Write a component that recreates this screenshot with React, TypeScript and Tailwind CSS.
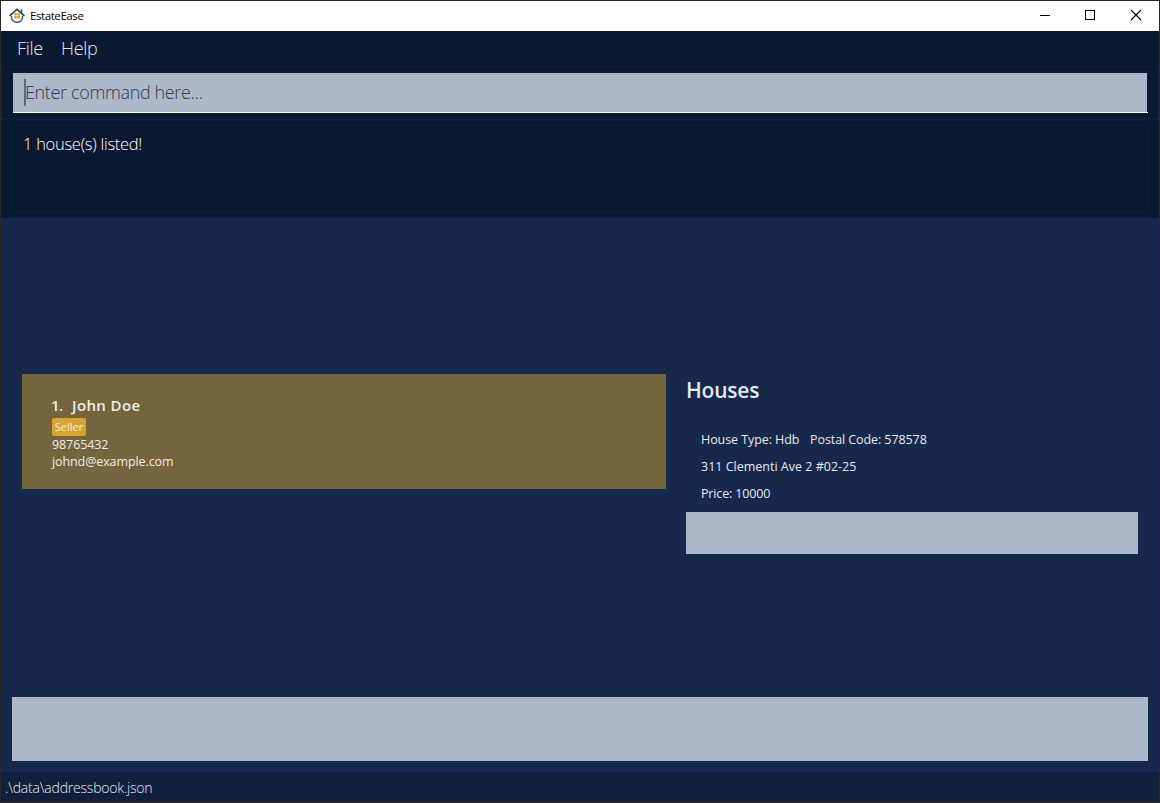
import React from "react";

function HouseLogo() {
  return (
    <svg width="16" height="16" viewBox="0 0 16 16" fill="none">
      <path d="M.6 7.800 8 1.300l7.400 6.500" stroke="#1f4a60" strokeWidth="1.600" />
      <path d="M12.500 1.500v3.400" stroke="#1f4a60" strokeWidth="1.600" />
      <path d="M2.500 8v2c.8 2.800 2.900 4.300 5.500 4.300s4.700-1.500 5.500-4.300V8" stroke="#3c6173" strokeWidth="1.400" />
      <path d="M5.200 5h2.500v2.500H5.200zM8.300 5h2.500v2.500H8.300zM5.200 8h2.500v2.500H5.200zM8.300 8h2.500v2.500H8.300z" fill="#f09a1c" />
    </svg>
  );
}

function TitleBar() {
  return (
    <header className="flex h-[30px] shrink-0 items-center bg-white pl-2 text-black">
      <HouseLogo />
      <span className="ml-[5px] text-[11.5px] leading-4 tracking-[-0.42px]">EstateEase</span>
      <div className="ml-auto flex h-full items-center">
        <svg width="137" height="30" viewBox="0 0 137 30" fill="none" stroke="#000" shapeRendering="crispEdges">
          <path d="M18 14.500h10" />
          <rect x="63.500" y="9.500" width="9" height="9" />
          <path d="m109 9 10 10m0-10-10 10" strokeWidth="1.100" shapeRendering="geometricPrecision" />
        </svg>
      </div>
    </header>
  );
}

function PersonCard() {
  return (
    <article className="h-[115px] w-[644px] bg-[#76643e] pl-[30px] pt-[22px] text-[#eeece6]">
      <h2 className="flex h-[22px] gap-[9px] whitespace-pre text-[15px] font-semibold leading-[19px]">
        <span className="-ml-px w-[12px] tracking-[-0.5px]">1.</span>
        <span className="tracking-[0.38px]">John Doe</span>
      </h2>
      <div className="flex h-[18px] w-[34px] items-center justify-center rounded-[2px] bg-[#d9a42e] text-[11px]">
        Seller
      </div>
      <p className="text-[12.500px] leading-[17px] tracking-[-0.1px]">98765432</p>
      <p className="text-[12.500px] leading-[17px] tracking-[-0.1px]">johnd@example.com</p>
    </article>
  );
}

function Houses() {
  return (
    <section className="ml-5 w-[452px] text-[#e6e9ee]">
      <h1 className="h-[52px] pt-[1px] text-[21px] font-semibold leading-[30px] tracking-[-0.2px]">Houses</h1>
      <div className="h-[86px] pl-[15px] text-[12.500px] leading-[27px] tracking-[-0.08px]">
        <p className="flex">
          <span className="w-[109px]">House Type: Hdb</span>
          <span>Postal Code: 578578</span>
        </p>
        <p className="tracking-[0px]">311 Clementi Ave 2 #02-25</p>
        <p className="tracking-[-0.15px]">Price: 10000</p>
      </div>
      <div className="h-[42px] bg-[#adb7ca]" />
    </section>
  );
}

export default function App() {
  return (
    <div className="flex h-[803px] w-[1160px] flex-col overflow-hidden border border-[#292929] bg-[#16284b] font-['Open_Sans','Noto_Sans',sans-serif]">
      <TitleBar />
      <div className="flex h-[187px] shrink-0 flex-col bg-[#0a1832]">
        <nav className="flex h-[35px] gap-[18px] pl-4 text-[18px] font-light leading-[35px] text-[#e6e8ec]">
          <span className="w-[26px] tracking-[-0.3px]">File</span>
          <span className="tracking-[-0.3px]">Help</span>
        </nav>
        <div className="h-[54px] border border-b-2 border-[#0e1f3e] pl-[11px] pr-[10px] pt-[6px]">
          <div className="h-10 border-b border-white">
            <div className="mr-px flex h-[39px] items-center bg-[#adb7ca] pl-[11px] text-[18px] font-light text-[#343a46]">
              <span className="h-[27px] w-[2px] shrink-0 bg-[#5c6a80]" />
              <span className="-ml-px whitespace-nowrap tracking-[-0.36px]">Enter command here...</span>
            </div>
          </div>
        </div>
        <div className="h-[98px] px-[11px] pt-[5px]">
          <div className="h-[88px] border border-[#0f1f3d] px-[10px] pt-[6px] text-[16.500px] font-light leading-6 tracking-[-0.28px] text-white">
            1 house(s) listed!
          </div>
        </div>
      </div>
      <main className="flex h-[554px] shrink-0 flex-col">
        <div className="flex grow items-start pl-[21px] pt-[156px]">
          <PersonCard />
          <Houses />
        </div>
        <div className="mx-[11px] mb-[11px] h-16 shrink-0 bg-[#adb7ca]" />
      </main>
      <footer className="h-[30px] shrink-0 bg-[#10203e] pl-1 text-[14px] font-light leading-[31px] tracking-[-0.2px] text-[#e6e8ec]">
        .\data\addressbook.json
      </footer>
    </div>
  );
}
